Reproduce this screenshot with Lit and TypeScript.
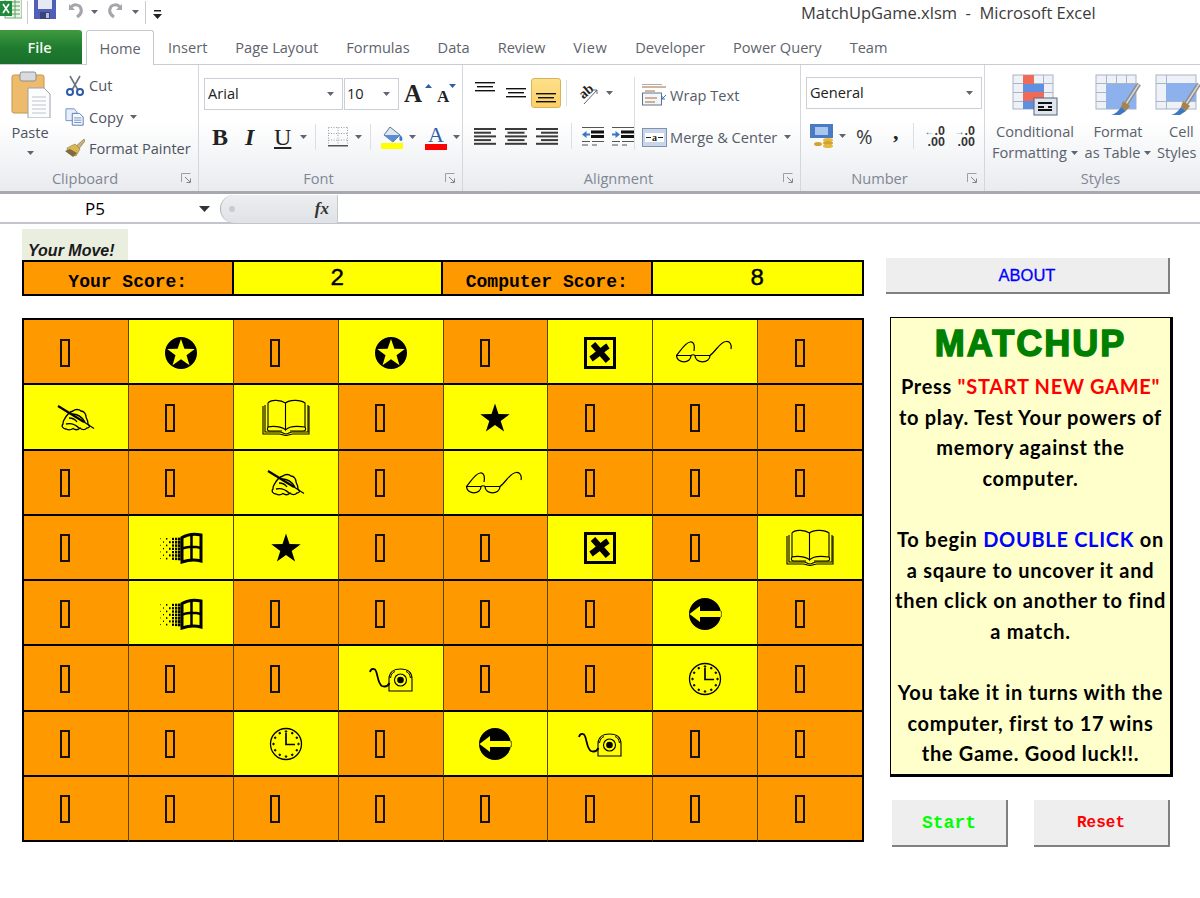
import { LitElement, html, css, svg } from "lit";
import { customElement } from "lit/decorators.js";

const tabs = ["Insert", "Page Layout", "Formulas", "Data", "Review", "View", "Developer", "Power Query", "Team"];

type Cell = "t" | "disc" | "box" | "glasses" | "hand" | "book" | "star" | "win" | "back" | "phone" | "clock";

const board: Cell[][] = [
  ["t", "disc", "t", "disc", "t", "box", "glasses", "t"],
  ["hand", "t", "book", "t", "star", "t", "t", "t"],
  ["t", "t", "hand", "t", "glasses", "t", "t", "t"],
  ["t", "win", "star", "t", "t", "box", "t", "book"],
  ["t", "win", "t", "t", "t", "t", "back", "t"],
  ["t", "t", "t", "phone", "t", "t", "clock", "t"],
  ["t", "t", "clock", "t", "back", "phone", "t", "t"],
  ["t", "t", "t", "t", "t", "t", "t", "t"],
];

const starPts = (cx: number, cy: number, R: number, r: number) => {
  const p: string[] = [];
  for (let i = 0; i < 10; i++) {
    const rad = i % 2 ? r : R;
    const a = (-90 + i * 36) * (Math.PI / 180);
    p.push(`${(cx + rad * Math.cos(a)).toFixed(1)} ${(cy + rad * Math.sin(a)).toFixed(1)}`);
  }
  return "M" + p.join("L") + "Z";
};

const winDots = () => {
  const out = [];
  for (let c = 0; c < 7; c++) {
    for (let r = 0; r < 7; r++) {
      const s = 0.7 + c * 0.32;
      if ((c + r) % 2 && c < 4) continue;
      out.push(svg`<rect x=${1 + c * 3} y=${5.5 + r * 3.3 + (7 - c) * 0.1} width=${s} height=${s + 0.3} fill="#000"/>`);
    }
  }
  return out;
};

const clockTicks = () => {
  const out = [];
  for (let i = 0; i < 12; i++) {
    const a = (i * 30 * Math.PI) / 180;
    out.push(svg`<circle cx=${17 + 12.5 * Math.cos(a)} cy=${17 + 12.5 * Math.sin(a)} r=".8" fill="#000"/>`);
  }
  return out;
};

const glyphs: Record<string, () => unknown> = {
  disc: () => html`<svg class="gl" width="34" height="34" viewBox="0 0 34 34"><path fill-rule="evenodd" d="M17 1a16 16 0 1 0 0 32a16 16 0 1 0 0-32Z ${starPts(17, 17.5, 14.5, 5.8)}"/></svg>`,
  box: () => html`<svg class="gl" width="34" height="34" viewBox="0 0 34 34"><rect x="2.500" y="2.500" width="29" height="29" fill="none" stroke="#000" stroke-width="3"/><path d="M10 8L25 25M25 10C20 13 14 19 8 23" stroke="#000" stroke-width="6" fill="none"/></svg>`,
  glasses: () => html`<svg class="gl" width="58" height="25" viewBox="0 0 58 25" fill="none" stroke="#000" stroke-width="1.200"><path d="M.5 15.500C1 24 15 24 15 15.500ZM19 15.500C19 24 34 24 34 15.500Z"/><path d="M15 15.500Q17 14 19 15.500"/><path d="M.5 15.500C5 10 9 3 14 2C18 1 19 6 18 11M34 15.500C40 11 44 2 50 1.500C54 1 56 5 55 9"/></svg>`,
  hand: () => html`<svg class="gl" width="38" height="26" viewBox="0 0 38 26" fill="none" stroke="#000"><path stroke-width="1.300" d="M7 15C9 11 12 7 16 6C18 4 22 4 24 6C27 6 29 9 29 12C30 14 31 16 31 19C33 21 33 23 30 23C28 25 25 25 23 23C21 25 18 25 16 23.500C14 25 11 25 9 24C6 24 4 21 6 19C6 17 6 16 7 15Z"/><path stroke-width="1.300" d="M15 9C20 9 25 12 28 17M12 13C15 13 18 14 20 17M9 19C13 18 18 19 22 23"/><path stroke-width="2.200" d="M1 1L27 17"/><path stroke-width="1.200" d="M27 17L37 23.500"/></svg>`,
  book: () => html`<svg class="gl" width="48" height="38" viewBox="0 0 48 38" fill="none" stroke="#000" stroke-width="1.100"><path d="M6 28V4C8 1 18 0 23.500 4V31C20 27 10 27 6 28ZM23.500 4C28 0 39 1 43 4V28C36 27 27 27 23.500 31"/><path d="M3 6V33H18C20 33 22 35 24 35C26 35 28 33 30 33H46V6"/><path d="M1 7V35H17C20 35 21 36.500 24 36.500C27 36.500 28 35 31 35H47V7"/><path d="M6 28C5 30 5 32 8 32H20M43 28C44 30 44 32 41 32H28"/></svg>`,
  star: () => html`<svg class="gl" width="32" height="32" viewBox="0 0 32 32"><path d=${starPts(16, 17, 15.5, 6)}/></svg>`,
  win: () => html`<svg class="gl" width="44" height="32" viewBox="0 0 44 32">${winDots()}<path d="M23 5.500C29 2 36 1.500 42 3V29C36 27.500 29 28 23 30Z" fill="none" stroke="#000" stroke-width="3"/><path d="M32.500 3V28M23 16.500C29 14.500 36 14.500 42 16" fill="none" stroke="#000" stroke-width="2.500"/></svg>`,
  back: () => html`<svg class="gl" width="34" height="34" viewBox="0 0 34 34"><path fill-rule="evenodd" d="M17 1a16 16 0 1 0 0 32a16 16 0 1 0 0-32Z M1.500 17L12 9V14H33.500V20H12V25Z"/></svg>`,
  phone: () => html`<svg class="gl" width="44" height="26" viewBox="0 0 44 26" fill="none" stroke="#000"><path stroke-width="1.800" d="M1 6C2 2 6 2 7 5C9 10 9 18 13 20C16 21 19 20 20.500 17"/><path stroke-width="1.100" d="M20 25V13C20 6 25 3 31.500 3C38 3 43 6 43 13V25Z"/><path stroke-width="1" d="M21.500 12C22 9 23 6.500 26 5.500M41.500 12C41 9 40 6.500 37 5.500"/><circle cx="31.500" cy="14" r="6" stroke-width="1.100"/><circle cx="31.500" cy="14" r="3.300" fill="#000" stroke="none"/></svg>`,
  clock: () => html`<svg class="gl" width="34" height="34" viewBox="0 0 34 34" fill="none" stroke="#000"><circle cx="17" cy="17" r="15.500" stroke-width="1.300"/>${clockTicks()}<path stroke-width="1.700" d="M17 6V17.500H26"/></svg>`,
};

const caret = html`<svg class="caret" width="7" height="4" viewBox="0 0 7 4"><path d="M0 0h7L3.500 4Z" fill="#5f6570"/></svg>`;

const launcher = html`<svg class="launcher" width="11" height="11" viewBox="0 0 11 11" fill="none"><path d="M.5 9V.5H9.500" stroke="#9aa0a8"/><path d="M4 4l5 5M9.500 5.500V9.500H5.500" stroke="#7c8590"/></svg>`;

const alignIcon = (mode: "l" | "c" | "r") => {
  const widths = [22, 17, 22, 17, 22];
  return html`<svg width="22" height="17" viewBox="0 0 22 17">
    ${widths.map((w, i) => {
      const x = mode === "l" ? 0 : mode === "c" ? (22 - w) / 2 : 22 - w;
      return svg`<rect x=${x} y=${i * 3.7} width=${w} height="2" fill="#3a3a3a"/>`;
    })}
  </svg>`;
};

const vAlignIcon = (widths: number[]) => html`<svg width="22" height="11" viewBox="0 0 22 11">
  ${widths.map((w, i) => svg`<rect x=${(22 - w) / 2} y=${i * 4} width=${w} height="1.400" fill="#111"/>`)}
</svg>`;

const indentIcon = (flip: boolean) => html`<svg width="22" height="19" viewBox="0 0 22 19">
  <rect x="0" y="0" width="22" height="1" fill="#555"/>
  <rect x="9" y="3.500" width="13" height="3" fill="#111"/>
  <rect x="9" y="8" width="13" height="3" fill="#111"/>
  <rect x="0" y="14" width="8" height="1" fill="#555"/><rect x="10" y="14" width="12" height="1" fill="#555"/>
  <rect x="0" y="17.500" width="6" height="1" fill="#555"/><rect x="10" y="17.500" width="5" height="1" fill="#555"/>
  ${flip
    ? svg`<path d="M8 7.500L3.500 4V6.500H0V8.500H3.500V11Z" fill="#3b76c4"/>`
    : svg`<path d="M0 7.500L4.500 4V6.500H8V8.500H4.500V11Z" fill="#3b76c4"/>`}
</svg>`;

const decimalIcon = (arrow: string) => html`<div class="decimal">
  <span><i>${arrow}</i>.0</span>
  <span>.00</span>
</div>`;

const tableIcon = (body: unknown) => html`<svg width="46" height="42" viewBox="0 0 46 42">${body}</svg>`;

const brush = svg`<path d="M44 10L31 30" stroke="#8d8d8d" stroke-width="4.500"/><path d="M44 10L31 30" stroke="#d8d8d8" stroke-width="1.500"/><path d="M28 27L35 32L31 37L26 33Z" fill="#a9824a"/><path d="M26 33L31 37L25 41H16C21 40 24 36 26 33Z" fill="#3c78c4"/>`;

const gridCells = (rows: number[], cols: number[]) => svg`
  <rect x="1" y="1" width="40" height="34" fill="#eef2f8" stroke="#a9b4c4"/>
  ${rows.map((y) => svg`<rect x="1" y=${y} width="40" height="1" fill="#a9b4c4"/>`)}
  ${cols.map((x) => svg`<rect x=${x} y="1" width="1" height="34" fill="#a9b4c4"/>`)}`;

@customElement("app-root")
export class AppRoot extends LitElement {
  static styles = css`
    :host {
      display: block;
      width: 1200px;
      height: 898px;
      overflow: hidden;
      background: #fff;
      font-family: "Open Sans", "Noto Sans", sans-serif;
      color: #4d5460;
    }
    svg { display: block; flex: none; }

    .title-bar { height: 30px; display: flex; align-items: flex-start; overflow: hidden; }
    .qat { display: flex; align-items: center; height: 24px; flex: none; width: 801px; }
    .qat-sep { width: 1px; height: 23px; background: #c9ccd2; }
    .qat-gap { font-size: 0; }
    .title { font-size: 16.500px; line-height: 26px; color: #3b3b3b; white-space: pre; }

    .tabs { height: 35px; display: flex; align-items: stretch; font-size: 14.6px; box-sizing: border-box; border-bottom: 1px solid #c9ccd2; }
    .file { width: 82px; height: 34px; background: linear-gradient(#3f9a3f, #1e7b2f 55%, #1a6f2a); color: #f2f7ee; font-weight: 600; font-size: 14.500px; display: flex; align-items: center; justify-content: center; border-radius: 0 3px 0 0; box-sizing: border-box; margin-right: 4px; padding-right: 3px; }
    .tab { display: flex; align-items: center; white-space: nowrap; color: #5d636c; padding-right: 28px; }
    .tab:nth-child(8) { letter-spacing: .5px; }
    .tab.home { width: 68px; height: 35px; padding: 0; justify-content: center; box-sizing: border-box; background: #fff; border: 1px solid #c6c9ce; border-bottom: none; border-radius: 3px 3px 0 0; margin-right: 14px; }

    .ribbon { height: 129px; display: flex; box-sizing: border-box; border-bottom: 3px solid #a6a9af; background: linear-gradient(#fff 45%, #e9ebef); font-size: 14.6px; }
    .group { display: flex; flex-direction: column; box-sizing: border-box; border-right: 1px solid #d3d6db; flex: none; position: relative; }
    .group-body { flex: 1; display: flex; min-height: 0; }
    .group-label { height: 24px; flex: none; text-align: center; color: #7f8794; line-height: 22px; }
    .launcher { position: absolute; right: 6px; bottom: 7px; }

    .paste { width: 60px; margin-right: 5px; display: flex; flex-direction: column; align-items: center; padding-top: 5px; }
    .paste-label { margin-top: 4px; line-height: 20px; }
    .paste .caret { margin-top: 9px; }
    .clip-list { display: flex; flex-direction: column; padding-top: 9px; gap: 9.500px; }
    .clip-row { display: flex; align-items: center; height: 22px; gap: 4px; white-space: nowrap; }
    .clip-row svg:first-child { width: 20px; }
    .clip-row .caret { margin-left: 3px; }

    .combo { box-sizing: border-box; height: 32px; border: 1px solid #ccd0d6; background: #fff; display: flex; align-items: center; justify-content: space-between; padding: 0 8px 3px 3px; color: #222; font-size: 14.600px; }
    .combo .caret { margin-top: 3px; }
    .font-body { flex-direction: column; padding: 13px 0 0 5px; }
    .font-top { display: flex; align-items: center; }
    .size-combo { margin-left: 1px; margin-right: 5px; padding-left: 2px; }
    .grow { display: flex; align-items: flex-end; font-family: "Liberation Serif", serif; font-weight: 700; color: #222; position: relative; }
    .font-bottom { display: flex; align-items: center; margin-top: 12px; height: 30px; }
    .fmt { font-family: "Liberation Serif", serif; color: #222; font-size: 24px; line-height: 28px; }
    .vsep { width: 1px; height: 26px; background: #dcdee2; flex: none; }
    .swatch { display: flex; flex-direction: column; align-items: center; width: 24px; }
    .swatch-letter { font-family: "Liberation Serif", serif; font-size: 22px; line-height: 19px; color: #2f5da8; }
    .bar { width: 22px; height: 6px; }

    .align-body { padding: 12px 0 0 6px; display: flex; }
    .align-grid { display: flex; flex-direction: column; width: 165px; flex: none; }
    .align-row { display: flex; align-items: center; height: 32px; }
    .align-row.low { margin-top: 13px; height: 28px; }
    .valign { width: 31px; display: flex; justify-content: center; }
    .valign.on { width: 30px; height: 30px; box-sizing: border-box; background: linear-gradient(#fde08a, #fcd066); border: 1px solid #d6b25c; border-radius: 3px; align-items: flex-end; padding-bottom: 3px; }
    .halign { width: 31px; display: flex; justify-content: center; }
    .wrap-col { display: flex; flex-direction: column; gap: 17px; padding-top: 5px; padding-left: 7px; border-left: 1px solid #dcdee2; height: 68px; }
    .wrap-row { display: flex; align-items: center; gap: 3px; height: 26px; white-space: nowrap; color: #555c68; }
    .wrap-row .caret { margin-left: 4px; }
    .orient-text { font: 700 14px "Liberation Serif", serif; fill: #222; }
    .merge-a { font: 700 10px "Liberation Serif", serif; fill: #222; }

    .num-body { flex-direction: column; padding: 12px 0 0 5px; }
    .num-row { display: flex; align-items: center; height: 30px; margin-top: 12px; color: #444; }
    .decimal { display: flex; flex-direction: column; align-items: flex-end; width: 30px; box-sizing: border-box; padding-right: 9px; font: 700 12.500px/10px "Liberation Sans", sans-serif; color: #333; }
    .decimal i { font-style: normal; color: #2f6dbb; font-size: 10px; }

    .styles-body { padding-top: 9px; }
    .style-btn { display: flex; flex-direction: column; align-items: center; flex: none; }
    .style-btn .txt { margin-top: 5px; line-height: 21px; text-align: center; white-space: nowrap; display: flex; flex-direction: column; align-items: center; color: #5a616d; }
    .style-btn .txt span { display: flex; align-items: center; gap: 4px; }
    .style-btn .txt.cell-txt { margin-left: 6px; align-items: flex-start; }

    .formula { height: 29px; display: flex; align-items: center; box-sizing: border-box; border-bottom: 2px solid #c2c5cb; margin-top: 1px; position: relative; }
    .name-box { width: 212px; display: flex; align-items: center; flex: none; color: #000; font-size: 17px; padding-left: 85px; box-sizing: border-box; gap: 94px; }
    .fx-pill { width: 118px; height: 28px; margin-left: 8px; flex: none; background: linear-gradient(#eceef1, #dfe2e6); border-left: 1px solid #b0b4ba; border-right: 1px solid #c6c9ce; border-radius: 14px 0 0 14px; display: flex; align-items: center; justify-content: space-between; padding: 0 8px; box-sizing: border-box; }
    .fx { font-family: "Liberation Serif", serif; font-style: italic; font-weight: 700; color: #333; font-size: 17px; }
    .dot { width: 6px; height: 6px; border-radius: 50%; background: #c8cbd0; }

    .sheet { display: flex; padding: 5px 0 0 22px; }
    .game { width: 842px; flex: none; }
    .your-move { width: 106px; height: 32px; box-sizing: border-box; background: #e9eedf; font: italic 700 16px "Liberation Sans", sans-serif; color: #1a1a1a; display: flex; align-items: flex-end; padding: 0 0 1px 6px; }
    .scores { display: grid; grid-template-columns: repeat(4, 1fr); height: 36px; box-sizing: border-box; border: 2px solid #000; margin-top: -1px; }
    .score { display: flex; align-items: center; justify-content: center; border-right: 2px solid #000; font-family: "Liberation Mono", monospace; color: #000; }
    .score:last-child { border-right: none; }
    .score.label { background: #ff9900; font-weight: 700; font-size: 18px; padding-top: 8px; box-sizing: border-box; }
    .score.value { background: #ffff00; font-size: 24px; -webkit-text-stroke: .4px #000; padding-top: 1px; box-sizing: border-box; }

    .board { margin-top: 22px; width: 842px; height: 524px; box-sizing: border-box; border: 2px solid #000; border-right-width: 1px; border-bottom-width: 0; display: grid; grid-template-columns: repeat(8, 1fr); grid-template-rows: repeat(8, 1fr); }
    .cell { display: flex; align-items: center; justify-content: center; box-sizing: border-box; border-right: 1px solid #5a4500; border-bottom: 2px solid #000; background: #ff9900; }
    .cell.open { background: #ffff00; }
    .cell:nth-child(8n) { border-right-color: #000; }
    .tofu { width: 10px; height: 28px; box-sizing: border-box; border: 2px solid #1a1200; margin: 2px 21px 0 0; }
    .gl { position: relative; top: 1px; }

    .side { width: 314px; flex: none; padding-top: 29px; font-family: "Liberation Sans", sans-serif; }
    .btn { box-sizing: border-box; background: #eeeeee; border-right: 2px solid #808080; border-bottom: 2px solid #808080; display: flex; align-items: center; justify-content: center; }
    .about { margin-left: 22px; width: 284px; height: 36px; color: #0000ff; font-size: 16.500px; -webkit-text-stroke: .3px #0000ff; }
    .panel { margin: 23px 0 0 26px; width: 283px; height: 460px; box-sizing: border-box; background: #ffffcc; border: 1px solid #000; border-right: 3px solid #000; border-bottom: 3px solid #000; text-align: center; color: #000; font-family: "Lato", "Open Sans", sans-serif; font-weight: 700; font-size: 20px; letter-spacing: .7px; line-height: 30.600px; padding-top: 6px; }
    .panel h1 { margin: 0 0 7px; font: 900 36px/40px "Liberation Sans", sans-serif; -webkit-text-stroke: 1.500px #008000; color: #008000; letter-spacing: 2px; }
    .panel p { margin: 0 0 30.600px; white-space: pre-line; }
    .red { color: #ff0000; }
    .blue { color: #0000ff; }
    .btn-row { display: flex; margin: 23px 0 0 28px; }
    .btn-row .btn { height: 47px; font: 700 18px "Liberation Mono", monospace; }
    .btn-row .start { width: 116px; color: #00ff00; }
    .btn-row .reset { width: 136px; color: #ff0000; margin-left: 26px; font-size: 16px; }
  `;

  private qat() {
    return html`<div class="qat">
      <svg width="22" height="20" viewBox="0 0 22 20" style="margin-top:-6px"><rect x="5" y="0" width="17" height="19" fill="#e9f3e6" stroke="#7fae80"/><path d="M11 3h9M11 7h9M11 11h9M11 15h9M15 0v19" stroke="#5fa164"/><rect x="0" y="2" width="12" height="15" fill="#1f8a3b"/><path d="M3 5l6 9M9 5l-6 9" stroke="#fff" stroke-width="1.600"/></svg>
      <div class="qat-sep" style="margin:0 6px 0 5px"></div>
      <svg width="22" height="19" viewBox="0 0 22 19" style="margin-top:-6px"><path d="M0 0H22V19H0Z" fill="#4f5fb8"/><rect x="4" y="0" width="14" height="9" fill="#e6e8f4"/><rect x="6" y="12" width="10" height="7" fill="#3a4477"/><rect x="12" y="13" width="3" height="5" fill="#b9c0dc"/></svg>
      <svg width="18" height="17" viewBox="0 0 18 17" style="margin:-6px 0 0 10px" fill="none"><path d="M3 3V9H9" fill="#a4a6ab"/><path d="M4 8C7 2 14 3 15 8C16 11 14 14 11 16" stroke="#a4a6ab" stroke-width="3"/></svg>
      <span class="qat-gap" style="margin-left:7px">${caret}</span>
      <svg width="18" height="17" viewBox="0 0 18 17" style="margin:-6px 0 0 9px" fill="none"><path d="M15 3V9H9" fill="#a4a6ab"/><path d="M14 8C11 2 4 3 3 8C2 11 4 14 7 16" stroke="#a4a6ab" stroke-width="3"/></svg>
      <span class="qat-gap" style="margin-left:7px">${caret}</span>
      <div class="qat-sep" style="margin-left:6px"></div>
      <svg width="9" height="10" viewBox="0 0 9 10" style="margin:5px 0 0 7px"><rect x="1" y="0" width="7" height="1.500" fill="#222"/><path d="M0 4H9L4.500 9Z" fill="#222"/></svg>
    </div>`;
  }

  private clipboard() {
    return html`<section class="group" style="width:199px">
      <div class="group-body">
        <div class="paste">
          <svg width="42" height="48" viewBox="0 0 42 48"><rect x="3" y="5" width="32" height="38" rx="2" fill="#eebb6c" stroke="#c4954e"/><rect x="11" y="2" width="16" height="9" rx="2" fill="#d8dade" stroke="#8b8f96"/><path d="M19 18H35L41 24V48H19Z" fill="#fdfdfd" stroke="#9aa3ae"/><path d="M23 27h14M23 31h14M23 35h14M23 39h14M23 43h14" stroke="#bcc5d0"/></svg>
          <span class="paste-label">Paste</span>
          ${caret}
        </div>
        <div class="clip-list">
          <div class="clip-row"><svg width="20" height="21" viewBox="0 0 20 21" fill="none"><path d="M5 1L13 15M15 1L7 15" stroke="#6c7480" stroke-width="1.600"/><circle cx="5" cy="17" r="3" stroke="#2a5aa8" stroke-width="2"/><circle cx="15" cy="17" r="3" stroke="#2a5aa8" stroke-width="2"/></svg><span>Cut</span></div>
          <div class="clip-row"><svg width="20" height="20" viewBox="0 0 22 20"><path d="M1 1H10L13 4V14H1Z" fill="#e8eef8" stroke="#6c8ac0"/><path d="M8 6H16L20 10V19H8Z" fill="#f4f7fc" stroke="#4e74b4"/><path d="M10 11h8M10 13.500h8M10 16h8" stroke="#6c8ac0"/></svg><span>Copy</span>${caret}</div>
          <div class="clip-row"><svg width="20" height="20" viewBox="0 0 20 20"><path d="M10 9L19 1L20 3L13 12Z" fill="#c9b27a" stroke="#7f6f46" stroke-width=".6"/><path d="M2 10L10 6L15 11L11 18L3 15Z" fill="#d9b64f" stroke="#8b7a3f" stroke-width=".6"/><path d="M0 13L5 11L12 15L8 19Z" fill="#7e6a44"/></svg><span>Format Painter</span></div>
        </div>
      </div>
      <div class="group-label" style="margin-right:28px">Clipboard</div>
      ${launcher}
    </section>`;
  }

  private font() {
    return html`<section class="group" style="width:264px">
      <div class="group-body font-body">
        <div class="font-top">
          <div class="combo" style="width:139px"><span>Arial</span>${caret}</div>
          <div class="combo size-combo" style="width:55px"><span>10</span>${caret}</div>
          <span class="grow" style="font-size:25px;line-height:24px;width:21px">A</span>
          <svg width="7" height="4" viewBox="0 0 7 4" style="margin:-16px 0 0 0"><path d="M0 4h7L3.500 0Z" fill="#2f5da8"/></svg>
          <span class="grow" style="font-size:17px;line-height:17px;margin:5px 0 0 5px;width:12px">A</span>
          <svg width="7" height="4" viewBox="0 0 7 4" style="margin:-16px 0 0 0"><path d="M0 0h7L3.500 4Z" fill="#2f5da8"/></svg>
        </div>
        <div class="font-bottom">
          <span class="fmt" style="font-weight:700;margin-left:8px;width:33px">B</span>
          <span class="fmt" style="font-weight:700;font-style:italic;width:29px">I</span>
          <span class="fmt" style="text-decoration:underline;width:26px">U</span>
          ${caret}
          <div class="vsep" style="margin:0 12px 0 8px"></div>
          <svg width="20" height="20" viewBox="0 0 20 20"><path d="M.5 .5h19M.5 6.500h19M.5 13h19M.5 .5v19M10 .5v19M19.500 .5v19" stroke="#9da1a8" stroke-dasharray="1 1.500" fill="none"/><rect x="0" y="18" width="20" height="1.500" fill="#555"/></svg>
          <span class="qat-gap" style="margin-left:7px">${caret}</span>
          <div class="vsep" style="margin:0 9px 0 8px"></div>
          <div class="swatch"><svg width="22" height="17" viewBox="0 0 22 17"><path d="M9 1L19 9L12 16L3 9Z" fill="#dfe7f2" stroke="#5e7593"/><path d="M3 9L12 16L19 9Z" fill="#5b8ed0"/><path d="M19 9C22 11 22 15 20 15C18 15 18 12 19 9Z" fill="#3e78c8"/></svg><div class="bar" style="background:#ffff00"></div></div>
          <span class="qat-gap" style="margin-left:5px">${caret}</span>
          <div class="swatch" style="margin-left:8px"><span class="swatch-letter">A</span><div class="bar" style="background:#ff0000"></div></div>
          <span class="qat-gap" style="margin-left:5px">${caret}</span>
        </div>
      </div>
      <div class="group-label" style="margin-right:24px">Font</div>
      ${launcher}
    </section>`;
  }

  private alignment() {
    return html`<section class="group" style="width:338px">
      <div class="group-body align-body">
        <div class="align-grid">
          <div class="align-row">
            <div class="valign" style="align-self:flex-start;padding-top:5px">${vAlignIcon([20, 16, 20])}</div>
            <div class="valign">${vAlignIcon([20, 16, 20])}</div>
            <div class="valign on">${vAlignIcon([20, 16, 20])}</div>
            <div class="vsep" style="margin:0 9px 0 5px"></div>
            <svg width="24" height="26" viewBox="0 0 24 26" fill="none"><text class="orient-text" x="3" y="16" transform="rotate(-40 10 12)">ab</text><path d="M8 24L21 10M17 10h4v4" stroke="#666"/></svg>
            <span class="qat-gap" style="margin-left:6px">${caret}</span>
          </div>
          <div class="align-row low">
            <div class="halign">${alignIcon("l")}</div>
            <div class="halign">${alignIcon("c")}</div>
            <div class="halign">${alignIcon("r")}</div>
            <div class="vsep" style="margin:0 10px 0 9px"></div>
            ${indentIcon(false)}
            <div style="width:8px"></div>
            ${indentIcon(true)}
          </div>
        </div>
        <div class="wrap-col">
          <div class="wrap-row"><svg width="25" height="22" viewBox="0 0 25 22" fill="none"><rect x=".5" y="9" width="19" height="12" fill="#f4f6fa" stroke="#5f7390"/><path d="M0 3H24M3 7H13M3 14H15M3 18H13" stroke="#a46a3a"/><path d="M0 .5H20" stroke="#aab" /><path d="M24 11L20 15M20 12V15H23" stroke="#3e6fb0"/></svg><span>Wrap Text</span></div>
          <div class="wrap-row"><svg width="25" height="19" viewBox="0 0 25 19"><rect x=".5" y=".5" width="24" height="18" fill="#c9d6ea" stroke="#7f93b2"/><rect x="3" y="5" width="19" height="9" fill="#fff"/><text class="merge-a" x="10" y="12.500">a</text><path d="M4 9.500H9M16 9.500H21" stroke="#222"/></svg><span>Merge &amp; Center</span>${caret}</div>
        </div>
      </div>
      <div class="group-label" style="margin-right:26px">Alignment</div>
      ${launcher}
    </section>`;
  }

  private number() {
    return html`<section class="group" style="width:184px">
      <div class="group-body num-body">
        <div class="combo" style="width:176px"><span>General</span>${caret}</div>
        <div class="num-row">
          <svg width="24" height="24" viewBox="0 0 24 24" style="margin-left:4px"><rect x="0" y="0" width="23" height="14" fill="#4a7ac4"/><rect x="5" y="3" width="13" height="8" fill="#a9c6ee"/><ellipse cx="18" cy="16" rx="5" ry="2" fill="#e7b93e"/><ellipse cx="18" cy="19" rx="5" ry="2" fill="#d4a32c"/><ellipse cx="18" cy="22" rx="5" ry="2" fill="#e7b93e"/><ellipse cx="8" cy="20" rx="4" ry="2" fill="#d4a32c"/></svg>
          <span class="qat-gap" style="margin-left:5px">${caret}</span>
          <span style="margin-left:10px;font-size:20px;width:37px;color:#3a3a3a">%</span>
          <span style="font:700 22px 'Liberation Serif',serif;width:20px;color:#222;margin-top:-8px">,</span>
          <div class="vsep"></div>
          <div style="width:10px"></div>
          ${decimalIcon("←")}
          ${decimalIcon("→")}
        </div>
      </div>
      <div class="group-label" style="margin-right:26px">Number</div>
      ${launcher}
    </section>`;
  }

  private stylesGroup() {
    const cols = [11, 21, 31];
    const rows = [9, 18, 27];
    return html`<section class="group" style="width:215px;border-right:none;overflow:hidden">
      <div class="group-body styles-body">
        <div class="style-btn" style="width:100px">
          ${tableIcon(svg`${gridCells(rows, cols)}
            <rect x="11" y="1" width="11" height="17" fill="#ef6a57"/><rect x="11" y="10" width="21" height="8" fill="#5f8fe0"/><rect x="11" y="18" width="21" height="9" fill="#ef6a57"/><rect x="11" y="27" width="11" height="8" fill="#5f8fe0"/>
            <rect x="22" y="24" width="23" height="17" fill="#dfe5ee" stroke="#586478"/><path d="M26 29h14M32 33l-6 0M26 36h14M36 33h4" stroke="#111" stroke-width="1.800"/>`)}
          <div class="txt">Conditional<span>Formatting ${caret}</span></div>
        </div>
        <div class="style-btn" style="width:66px">
          ${tableIcon(svg`${gridCells(rows, cols)}<rect x="11" y="10" width="30" height="25" fill="#8db1ec"/>${brush}`)}
          <div class="txt">Format<span>as Table ${caret}</span></div>
        </div>
        <div class="style-btn" style="width:49px;align-items:flex-start">
          <div style="margin-left:4px">${tableIcon(svg`${gridCells([9, 27], [11])}<rect x="11" y="9" width="30" height="18" fill="#8db1ec"/>${brush}`)}</div>
          <div class="txt cell-txt">
            <div style="margin-left:12px">Cell</div>
            <span>Styles</span>
          </div>
        </div>
      </div>
      <div class="group-label" style="margin-left:16px">Styles</div>
    </section>`;
  }

  render() {
    return html`
      <header class="title-bar">${this.qat()}<span class="title">MatchUpGame.xlsm  -  Microsoft Excel</span></header>
      <nav class="tabs">
        <div class="file">File</div>
        <div class="tab home">Home</div>
        ${tabs.map((t) => html`<div class="tab">${t}</div>`)}
      </nav>
      <div class="ribbon">
        ${this.clipboard()} ${this.font()} ${this.alignment()} ${this.number()} ${this.stylesGroup()}
      </div>
      <div class="formula">
        <div class="name-box"><span>P5</span><svg width="11" height="6" viewBox="0 0 11 6"><path d="M0 0H11L5.500 6Z" fill="#333"/></svg></div>
        <div class="fx-pill"><span class="dot"></span><span class="fx">fx</span></div>
      </div>
      <main class="sheet">
        <div class="game">
          <div class="your-move">Your Move!</div>
          <div class="scores">
            <div class="score label">Your Score:</div>
            <div class="score value">2</div>
            <div class="score label">Computer Score:</div>
            <div class="score value">8</div>
          </div>
          <div class="board">
            ${board.flat().map((c) =>
              c === "t"
                ? html`<div class="cell"><span class="tofu"></span></div>`
                : html`<div class="cell open">${glyphs[c]()}</div>`
            )}
          </div>
        </div>
        <aside class="side">
          <div class="btn about">ABOUT</div>
          <div class="panel">
            <h1>MATCHUP</h1>
            <p>Press <span class="red">"START NEW GAME"</span>
to play. Test Your powers of
memory against the
computer.</p>
            <p>To begin <span class="blue">DOUBLE CLICK</span> on
a sqaure to uncover it and
then click on another to find
a match.</p>
            <p>You take it in turns with the
computer, first to 17 wins
the Game. Good luck!!.</p>
          </div>
          <div class="btn-row">
            <div class="btn start">Start</div>
            <div class="btn reset">Reset</div>
          </div>
        </aside>
      </main>
    `;
  }
}
